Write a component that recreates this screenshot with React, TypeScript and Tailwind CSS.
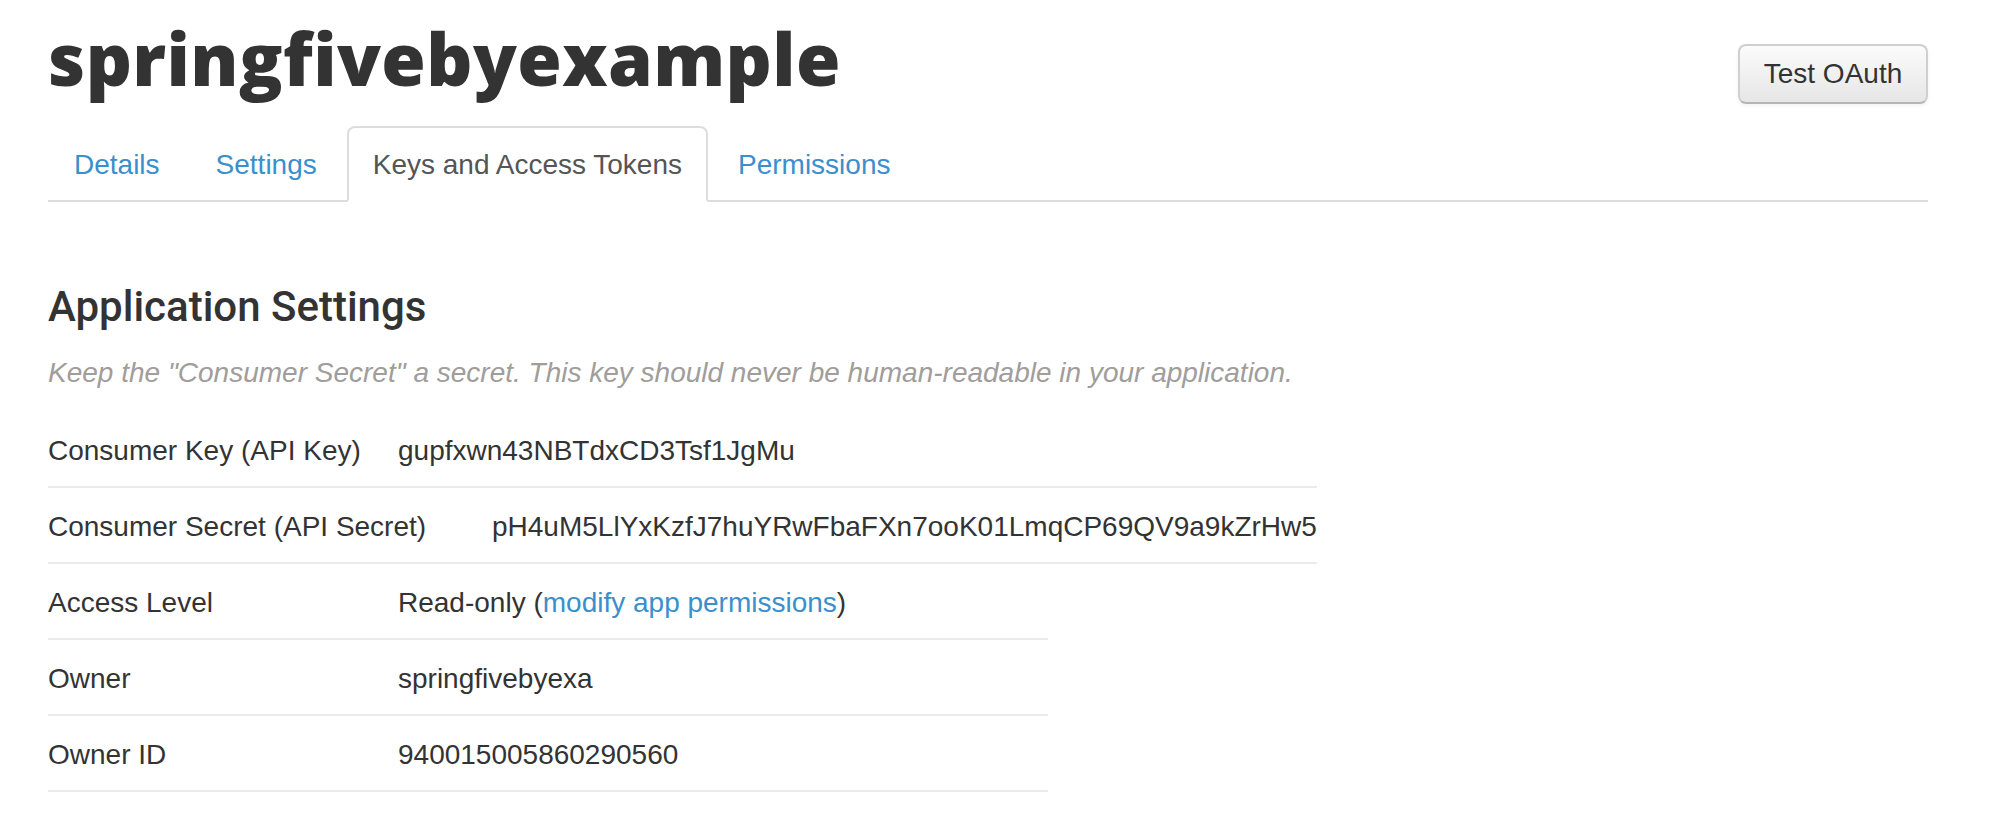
export default function App() {
  const tabs = [
    { label: "Details", active: false },
    { label: "Settings", active: false },
    { label: "Keys and Access Tokens", active: true },
    { label: "Permissions", active: false },
  ];
  return (
    <div className="min-h-screen bg-white text-[#333] font-['Liberation_Sans',Arial,sans-serif]">
      <div className="ml-[48px] w-[1880px] pt-[18px]">
        <div className="flex items-start justify-between">
          <h1 className="font-['Open_Sans',sans-serif] font-extrabold text-[72px] leading-[80px] tracking-[0.4px] text-[#333]">
            springfivebyexample
          </h1>
          <button className="mt-[26px] h-[60px] w-[190px] rounded-[8px] border-2 border-[#cfcfcf] border-b-[#b5b5b5] bg-linear-to-b from-[#fbfbfb] to-[#e6e6e6] text-[28px] leading-[40px] text-[#333] shadow-[0_2px_4px_rgba(0,0,0,0.05)]">
            Test OAuth
          </button>
        </div>

        <ul className="mt-[22px] flex border-b-2 border-[#ddd]">
          {tabs.map((t) => (
            <li key={t.label} className="-mb-[2px]">
              <a
                className={
                  t.active
                    ? "mr-[4px] block rounded-t-[8px] border-2 border-[#ddd] border-b-transparent bg-white px-[24px] pt-[17px] pb-[15px] text-[28px] leading-[40px] text-[#555]"
                    : "mr-[4px] block rounded-t-[8px] border-2 border-transparent px-[24px] pt-[17px] pb-[15px] text-[28px] leading-[40px] text-[#3a8fcc]"
                }
              >
                {t.label}
              </a>
            </li>
          ))}
        </ul>

        <h2 className="mt-[80px] font-['Roboto',sans-serif] font-medium text-[42px] leading-[50px] text-[#333]">
          Application Settings
        </h2>
        <p className="mt-[21px] italic text-[28px] leading-[40px] text-[#a09d9b]">
          Keep the "Consumer Secret" a secret. This key should never be human-readable in your application.
        </p>

        <div className="mt-[19px] flex w-fit min-w-[1000px] flex-col text-[28px] leading-[42px]">
          <div className="flex border-b-2 border-[#ebebeb] pt-[18px] pb-[14px]">
            <span className="w-[350px] shrink-0">Consumer Key (API Key)</span>
            <span>gupfxwn43NBTdxCD3Tsf1JgMu</span>
          </div>
          <div className="flex border-b-2 border-[#ebebeb] pt-[18px] pb-[14px]">
            <span className="w-[444px] shrink-0">Consumer Secret (API Secret)</span>
            <span>pH4uM5LlYxKzfJ7huYRwFbaFXn7ooK01LmqCP69QV9a9kZrHw5</span>
          </div>
        </div>

        <div className="flex w-[1000px] flex-col text-[28px] leading-[42px]">
          <div className="flex border-b-2 border-[#ebebeb] pt-[18px] pb-[14px]">
            <span className="w-[350px] shrink-0">Access Level</span>
            <span>
              Read-only (<a className="text-[#3a8fcc]">modify app permissions</a>)
            </span>
          </div>
          <div className="flex border-b-2 border-[#ebebeb] pt-[18px] pb-[14px]">
            <span className="w-[350px] shrink-0">Owner</span>
            <span>springfivebyexa</span>
          </div>
          <div className="flex border-b-2 border-[#ebebeb] pt-[18px] pb-[14px]">
            <span className="w-[350px] shrink-0">Owner ID</span>
            <span>940015005860290560</span>
          </div>
        </div>
      </div>
    </div>
  );
}
